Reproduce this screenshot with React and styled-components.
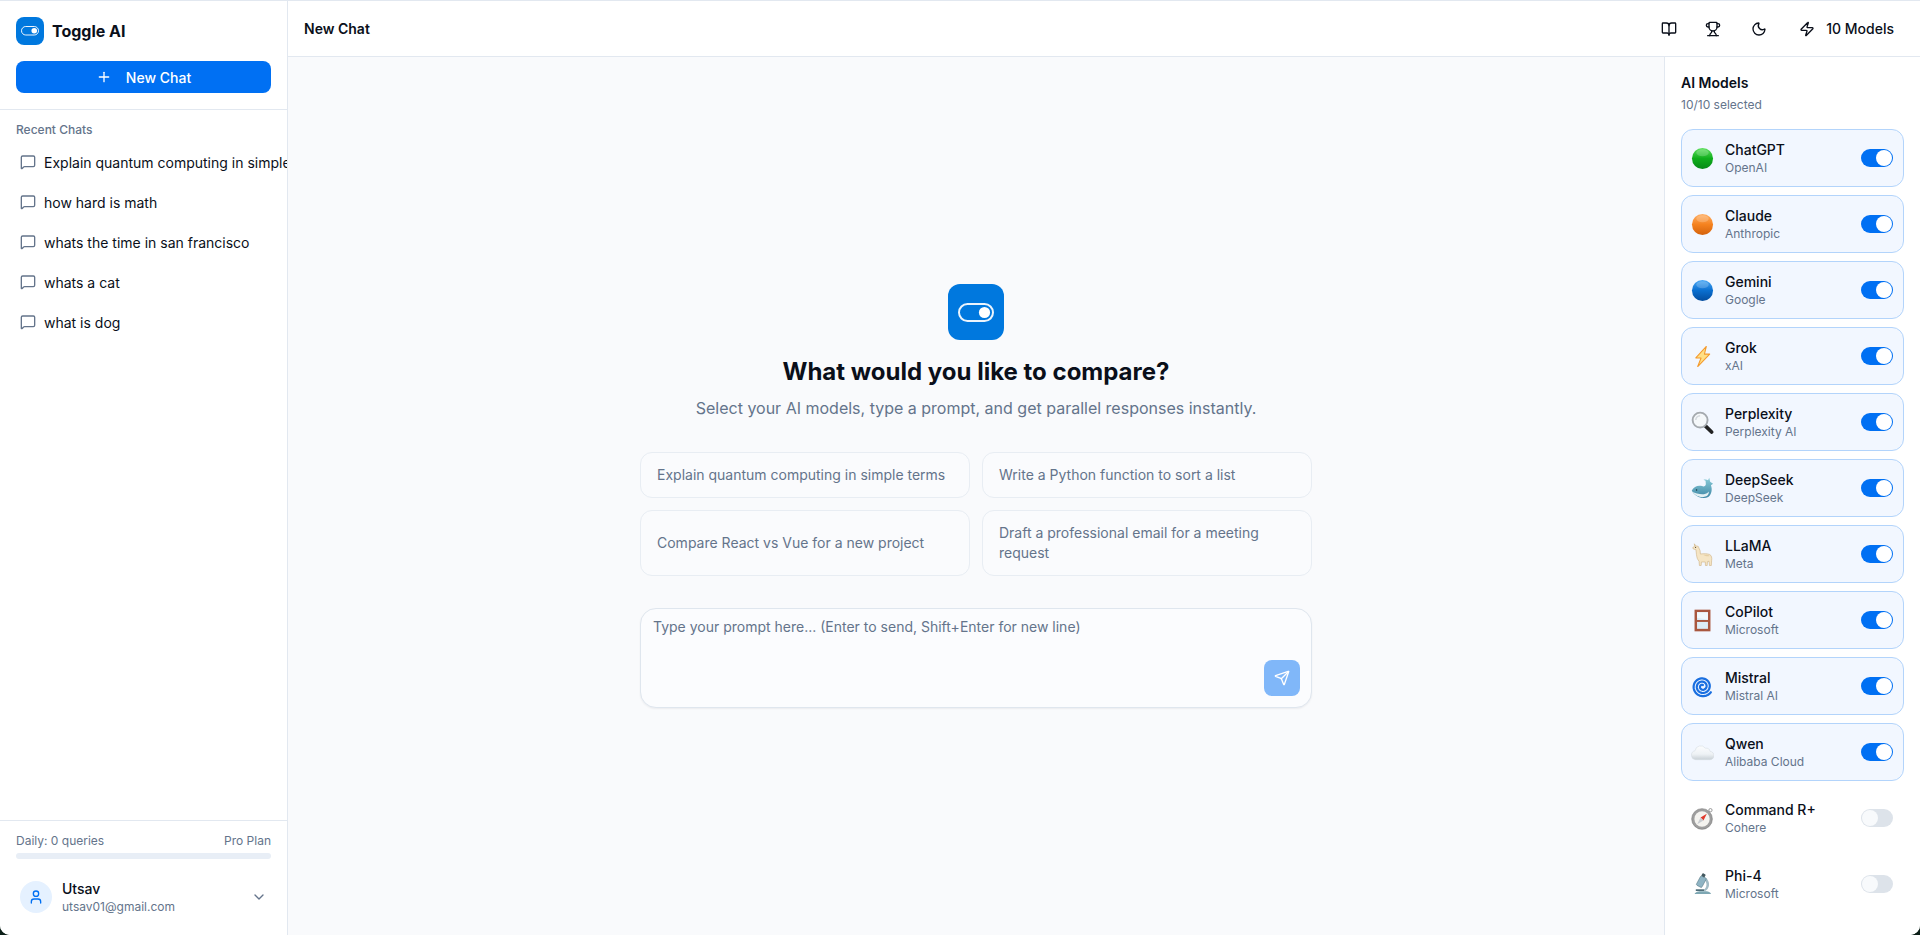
import React from "react";
import styled, { createGlobalStyle } from "styled-components";
import { BookOpen, ChevronDown, MessageSquare, Moon, Plus, Send, Trophy, User, Zap } from "lucide-react";

const recentChats = [
	"Explain quantum computing in simple terms",
	"how hard is math",
	"whats the time in san francisco",
	"whats a cat",
	"what is dog",
];

const suggestions = [
	"Explain quantum computing in simple terms",
	"Write a Python function to sort a list",
	"Compare React vs Vue for a new project",
	"Draft a professional email for a meeting request",
];

const Art = ({ children }) => (
	<svg viewBox="0 0 24 24" width="23" height="23" fill="none">
		{children}
	</svg>
);

const Ball = ({ id, light, mid, dark }) => (
	<Art>
		<defs>
			<linearGradient id={id} x1="0" y1="0" x2="0" y2="1">
				<stop offset="0" stopColor={light} />
				<stop offset="0.5" stopColor={mid} />
				<stop offset="1" stopColor={dark} />
			</linearGradient>
		</defs>
		<circle cx="12" cy="12" r="11" fill={`url(#${id})`} />
		<ellipse cx="12" cy="6" rx="6.5" ry="3.6" fill="#fff" opacity="0.2" />
	</Art>
);

const Bolt = () => (
	<Art>
		<path d="M16 1.5 5 13.5h5.500L7 22.500 19.500 9.500H14l2-8z" fill="#ffdf85" stroke="#f49a2c" strokeWidth="1.100" strokeLinejoin="round" />
	</Art>
);

const Magnifier = () => (
	<Art>
		<path d="M15 15.500 21.500 22" stroke="#222" strokeWidth="3.800" strokeLinecap="round" />
		<circle cx="9.500" cy="9.500" r="7.800" fill="#f5f8fa" stroke="#a5aaaf" strokeWidth="2" />
		<path d="M5 9.500a4.600 4.600 0 0 1 4.500-4.500" stroke="#d2d7dc" strokeWidth="1.500" />
	</Art>
);

const Whale = () => (
	<Art>
		<defs>
			<linearGradient id="whaleBody" x1="0" y1="0" x2="0" y2="1">
				<stop offset="0" stopColor="#8accd8" />
				<stop offset="1" stopColor="#3f87a6" />
			</linearGradient>
		</defs>
		<path d="M.8 14C3 10 7.500 8 11.500 9.500c2 .8 3.500 0 4-2l-.3-3.500-2.200-1.200c2-.3 3.500-.3 4.800.7L19 .8l1 4.200 3 2-2.200 1.500c1.700 4.500.7 9.500-2.800 12.300-5 2.700-14 .2-17.200-6.800z" fill="url(#whaleBody)" />
		<path d="M1.500 15.500c3 1.500 8 3 12 2.500 2.500-.3 4-1.300 5-2.800.5 2-.7 4-2.500 5-4.500 2-11.500.2-14.500-4.700z" fill="#e4f0f3" />
		<circle cx="5.800" cy="13.500" r="0.800" fill="#17323c" />
	</Art>
);

const Llama = () => (
	<Art>
		<path d="M3.500.8 5 3l2.500.5L9.500 8l.3 3.500c3.500-.5 7.500-.5 9.700.5 2 1 2.500 3.500 2 6.500l-.3 5h-1.900l-.5-4.500-1.600.5-.3 4h-1.800l-.2-3.700h-4l-.3 3.700H8.800l-.4-4.500c-1.500-1.500-2.400-4-2.700-7L5.200 7 2.500 6.300 1.800 4.800 3.800 3.500z" fill="#f5e5c5" stroke="#cdae7e" strokeWidth="0.600" strokeLinejoin="round" />
		<path d="M13 12.500c2-.3 5-.2 6.500 1-1.500.5-4.500.5-6.500-1z" fill="#e6cfa4" />
		<circle cx="4.800" cy="4.500" r="0.600" fill="#3a2c1a" />
	</Art>
);

const Win = () => (
	<Art>
		<rect x="5" y="2" width="14" height="20" fill="#dcecf6" stroke="#a9573f" strokeWidth="2.600" />
		<path d="M6.300 3.300h11.400v8L6.300 9z" fill="#f1f8fc" />
		<path d="M5 12.500h14" stroke="#a9573f" strokeWidth="2" />
	</Art>
);

// archimedean spiral, winding in from the rim of the icon
const spiralPath = () => {
	let d = "";
	for (let i = 0; i <= 120; i++) {
		const angle = (i / 120) * Math.PI * 5.4 + 0.6;
		const radius = 10.6 - (i / 120) * 9;
		const x = 12 + radius * Math.cos(angle);
		const y = 12 + radius * Math.sin(angle);
		d += `${i === 0 ? "M" : "L"}${x.toFixed(2)} ${y.toFixed(2)}`;
	}
	return d;
};

const Spiral = () => (
	<Art>
		<path d={spiralPath()} stroke="#1a6fe0" strokeWidth="2.300" strokeLinecap="round" strokeLinejoin="round" />
	</Art>
);

const Cloud = () => (
	<Art>
		<defs>
			<linearGradient id="cloudFill" x1="0" y1="0" x2="0" y2="1">
				<stop offset="0" stopColor="#fcfdfe" />
				<stop offset="0.6" stopColor="#eef2f5" />
				<stop offset="1" stopColor="#c8d0d6" />
			</linearGradient>
		</defs>
		<path d="M5 19.500a4.700 4.700 0 0 1-.8-9.300A6 6 0 0 1 15 7.500a4.500 4.500 0 0 1 5 3.400A4.300 4.300 0 0 1 19.500 19.500z" fill="url(#cloudFill)" stroke="#d5dce1" strokeWidth="0.600" />
	</Art>
);

const Compass = () => (
	<Art>
		<circle cx="20.300" cy="3.300" r="1.700" stroke="#8a8a8a" strokeWidth="0.900" />
		<circle cx="11.500" cy="12.500" r="10.800" fill="#9e9e9e" stroke="#767676" strokeWidth="0.600" />
		<circle cx="11.500" cy="12.500" r="8" fill="#f4f3ef" />
		<path d="M16.500 7 10 11l3 3z" fill="#e0392b" />
		<path d="M6.500 18 10 11l3 3z" fill="#c9cdd1" />
	</Art>
);

const Microscope = () => (
	<Art>
		<path d="M4 21c1.500-1.200 3-2 5-2h7c2.200 0 4 1 5 3H4z" fill="#7ea7b3" />
		<path d="M5 17h9v1.800H5z" fill="#4f6c77" />
		<path d="M14.500 4.500c4 2.200 5.500 7.500 3.500 11-.9 1.700-2 2.900-3.500 3.500l-1-1.500c3.500-2.500 3.500-8 .2-11z" fill="#a3bcc6" />
		<rect x="7.500" y="3.500" width="6.500" height="11" rx="1.200" transform="rotate(28 10.700 9)" fill="#8fb4c4" stroke="#5e7f8a" strokeWidth="0.600" />
		<rect x="11.200" y="0.700" width="3.800" height="3.200" rx="0.700" transform="rotate(28 13 2.300)" fill="#43585f" />
	</Art>
);

const models = [
	{ name: "ChatGPT", vendor: "OpenAI", on: true, icon: <Ball id="ballGreen" light="#5fe05f" mid="#0fae1c" dark="#078a18" /> },
	{ name: "Claude", vendor: "Anthropic", on: true, icon: <Ball id="ballOrange" light="#ffb066" mid="#f5821f" dark="#d4620c" /> },
	{ name: "Gemini", vendor: "Google", on: true, icon: <Ball id="ballBlue" light="#4aa8f5" mid="#0a6fd0" dark="#034c9e" /> },
	{ name: "Grok", vendor: "xAI", on: true, icon: <Bolt /> },
	{ name: "Perplexity", vendor: "Perplexity AI", on: true, icon: <Magnifier /> },
	{ name: "DeepSeek", vendor: "DeepSeek", on: true, icon: <Whale /> },
	{ name: "LLaMA", vendor: "Meta", on: true, icon: <Llama /> },
	{ name: "CoPilot", vendor: "Microsoft", on: true, icon: <Win /> },
	{ name: "Mistral", vendor: "Mistral AI", on: true, icon: <Spiral /> },
	{ name: "Qwen", vendor: "Alibaba Cloud", on: true, icon: <Cloud /> },
	{ name: "Command R+", vendor: "Cohere", on: false, icon: <Compass /> },
	{ name: "Phi-4", vendor: "Microsoft", on: false, icon: <Microscope /> },
];

const LogoGlyph = ({ width }) => (
	<svg viewBox="0 0 36 19" width={width} fill="none">
		<rect x="1" y="1" width="34" height="17" rx="8.500" stroke="#fff" strokeWidth="2" opacity="0.92" />
		<circle cx="26.500" cy="9.500" r="5.600" fill="#fff" />
	</svg>
);

const App = () => {
	return (
		<>
			<GlobalStyle />
			<Page>
				<Sidebar>
					<SidebarTop>
						<Brand>
							<LogoBox $size={28} $radius={8}>
								<LogoGlyph width={18} />
							</LogoBox>
							<BrandName>Toggle AI</BrandName>
						</Brand>
						<NewChatButton>
							<Plus size={16} strokeWidth={2} />
							New Chat
						</NewChatButton>
					</SidebarTop>
					<Recent>
						<RecentTitle>Recent Chats</RecentTitle>
						{recentChats.map((chat) => (
							<ChatRow key={chat}>
								<MessageSquare size={16} />
								<span>{chat}</span>
							</ChatRow>
						))}
					</Recent>
					<SidebarFoot>
						<UsageLine>
							<span>Daily: 0 queries</span>
							<span>Pro Plan</span>
						</UsageLine>
						<UsageBar />
						<UserRow>
							<Avatar>
								<User size={16} />
							</Avatar>
							<UserText>
								<UserName>Utsav</UserName>
								<UserMail>utsav01@gmail.com</UserMail>
							</UserText>
							<ChevronDown size={16} color="#64748b" />
						</UserRow>
					</SidebarFoot>
				</Sidebar>
				<Main>
					<TopBar>
						<TopTitle>New Chat</TopTitle>
						<TopActions>
							<IconButton $width={36}>
								<BookOpen size={16} />
							</IconButton>
							<IconButton $width={36}>
								<Trophy size={16} />
							</IconButton>
							<IconButton $width={40}>
								<Moon size={16} />
							</IconButton>
							<ModelsButton>
								<Zap size={16} />
								10 Models
							</ModelsButton>
						</TopActions>
					</TopBar>
					<Body>
						<Center>
							<Welcome>
								<LogoBox $size={56} $radius={12}>
									<LogoGlyph width={36} />
								</LogoBox>
								<Heading>What would you like to compare?</Heading>
								<Sub>Select your AI models, type a prompt, and get parallel responses instantly.</Sub>
								<SuggestionGrid>
									{suggestions.map((text) => (
										<Suggestion key={text}>{text}</Suggestion>
									))}
								</SuggestionGrid>
								<Composer>
									<PromptInput rows={2} placeholder="Type your prompt here... (Enter to send, Shift+Enter for new line)" />
									<SendButton>
										<Send size={16} />
									</SendButton>
								</Composer>
							</Welcome>
						</Center>
						<ModelPanel>
							<PanelTitle>AI Models</PanelTitle>
							<PanelSub>10/10 selected</PanelSub>
							<ModelList>
								{models.map((model) => (
									<ModelCard key={model.name} $on={model.on}>
										<ModelIcon>{model.icon}</ModelIcon>
										<ModelText>
											<ModelName>{model.name}</ModelName>
											<ModelVendor>{model.vendor}</ModelVendor>
										</ModelText>
										<Switch $on={model.on} />
									</ModelCard>
								))}
							</ModelList>
						</ModelPanel>
					</Body>
				</Main>
			</Page>
		</>
	);
};

const GlobalStyle = createGlobalStyle`
	* {
		box-sizing: border-box;
	}
	html,
	body {
		margin: 0;
		height: 100%;
		overflow: hidden;
		background: #0c1f18;
	}
	body {
		font-family: Inter, "Liberation Sans", sans-serif;
		color: #0a0f1a;
	}
`;

const Page = styled.div`
	display: flex;
	height: 935px;
	background: #fff;
	border-top: 1px solid #e2e8f0;
	border-radius: 0 0 10px 10px;
	overflow: hidden;
`;

const Sidebar = styled.aside`
	display: flex;
	flex-direction: column;
	width: 288px;
	flex-shrink: 0;
	background: #fff;
	border-right: 1px solid #e2e8f0;
`;

const SidebarTop = styled.div`
	padding: 16px;
	border-bottom: 1px solid #e2e8f0;
`;

const Brand = styled.div`
	display: flex;
	align-items: center;
	gap: 8px;
	margin-bottom: 16px;
`;

const LogoBox = styled.div`
	display: flex;
	align-items: center;
	justify-content: center;
	width: ${(p) => p.$size}px;
	height: ${(p) => p.$size}px;
	border-radius: ${(p) => p.$radius}px;
	background: #0078de;
	flex-shrink: 0;
`;

const BrandName = styled.span`
	font-size: 16px;
	font-weight: 700;
	line-height: 28px;
`;

const NewChatButton = styled.button`
	display: flex;
	align-items: center;
	justify-content: center;
	gap: 14px;
	width: 100%;
	height: 32px;
	border: 0;
	border-radius: 8px;
	background: #0070f3;
	color: #fff;
	font-family: inherit;
	font-size: 14px;
	font-weight: 500;
`;

const Recent = styled.div`
	flex: 1;
	padding-top: 12px;
	overflow: hidden;
`;

const RecentTitle = styled.div`
	padding: 0 16px 4px;
	font-size: 12px;
	line-height: 16px;
	font-weight: 500;
	color: #64748b;
`;

const ChatRow = styled.div`
	display: flex;
	align-items: center;
	gap: 8px;
	height: 40px;
	padding-left: 20px;
	font-size: 14px;
	white-space: nowrap;
	overflow: hidden;
	svg {
		flex-shrink: 0;
		color: #64748b;
	}
`;

const SidebarFoot = styled.div`
	padding: 12px 16px 20px;
	border-top: 1px solid #e2e8f0;
`;

const UsageLine = styled.div`
	display: flex;
	justify-content: space-between;
	font-size: 12px;
	line-height: 16px;
	color: #64748b;
`;

const UsageBar = styled.div`
	height: 6px;
	margin-top: 4px;
	border-radius: 3px;
	background: #e8eef6;
`;

const UserRow = styled.div`
	display: flex;
	align-items: center;
	gap: 10px;
	margin-top: 20px;
	padding: 0 4px;
`;

const Avatar = styled.div`
	display: flex;
	align-items: center;
	justify-content: center;
	width: 32px;
	height: 32px;
	border-radius: 50%;
	background: #e5f1ff;
	color: #0070f3;
	flex-shrink: 0;
`;

const UserText = styled.div`
	flex: 1;
	min-width: 0;
`;

const UserName = styled.div`
	font-size: 14px;
	line-height: 20px;
	font-weight: 500;
`;

const UserMail = styled.div`
	font-size: 12px;
	line-height: 16px;
	color: #64748b;
`;

const Main = styled.main`
	display: flex;
	flex-direction: column;
	flex: 1;
	min-width: 0;
`;

const TopBar = styled.header`
	display: flex;
	align-items: center;
	justify-content: space-between;
	height: 56px;
	padding: 0 16px;
	flex-shrink: 0;
	background: #fff;
	border-bottom: 1px solid #e2e8f0;
`;

const TopTitle = styled.h1`
	margin: 0;
	font-size: 14px;
	font-weight: 600;
`;

const TopActions = styled.div`
	display: flex;
	align-items: center;
	gap: 8px;
`;

const IconButton = styled.button`
	display: flex;
	align-items: center;
	justify-content: center;
	width: ${(p) => p.$width}px;
	height: 36px;
	padding: 0;
	border: 0;
	background: none;
	color: #0a0f1a;
`;

const ModelsButton = styled.button`
	display: flex;
	align-items: center;
	gap: 11px;
	height: 36px;
	padding: 0 10px 0 12px;
	border: 0;
	background: none;
	color: #0a0f1a;
	font-family: inherit;
	font-size: 14px;
	font-weight: 500;
`;

const Body = styled.div`
	display: flex;
	flex: 1;
	min-height: 0;
`;

const Center = styled.section`
	display: flex;
	align-items: center;
	justify-content: center;
	flex: 1;
	min-width: 0;
	background: #f9fafc;
`;

const Welcome = styled.div`
	display: flex;
	flex-direction: column;
	align-items: center;
	width: 672px;
`;

const Heading = styled.h2`
	margin: 16px 0 0;
	font-size: 24px;
	line-height: 32px;
	font-weight: 700;
`;

const Sub = styled.p`
	margin: 8px 0 0;
	font-size: 16px;
	line-height: 24px;
	color: #64748b;
`;

const SuggestionGrid = styled.div`
	display: grid;
	grid-template-columns: 1fr 1fr;
	gap: 12px;
	width: 100%;
	margin-top: 32px;
`;

const Suggestion = styled.button`
	display: block;
	padding: 12px 16px;
	border: 1px solid #e8edf3;
	border-radius: 12px;
	background: #fafbfd;
	color: #64748b;
	font-family: inherit;
	font-size: 14px;
	line-height: 20px;
	text-align: left;
`;

const Composer = styled.div`
	position: relative;
	width: 100%;
	height: 100px;
	margin-top: 32px;
	border: 1px solid #dfe6ee;
	border-radius: 16px;
	background: #fbfcfe;
	box-shadow: 0 1px 2px rgba(15, 23, 42, 0.06);
`;

const PromptInput = styled.textarea`
	display: block;
	width: 100%;
	height: 100%;
	padding: 8px 12px;
	border: 0;
	background: none;
	outline: none;
	resize: none;
	font-family: inherit;
	font-size: 14px;
	line-height: 20px;
	&::placeholder {
		color: #64748b;
		opacity: 1;
	}
`;

const SendButton = styled.button`
	position: absolute;
	right: 11px;
	bottom: 11px;
	display: flex;
	align-items: center;
	justify-content: center;
	width: 36px;
	height: 36px;
	padding: 0;
	border: 0;
	border-radius: 8px;
	background: #80b7f9;
	color: #fff;
`;

const ModelPanel = styled.aside`
	width: 256px;
	flex-shrink: 0;
	padding: 16px;
	background: #fff;
	border-left: 1px solid #e2e8f0;
	overflow: hidden;
`;

const PanelTitle = styled.div`
	font-size: 14px;
	line-height: 20px;
	font-weight: 600;
`;

const PanelSub = styled.div`
	margin-top: 4px;
	font-size: 12px;
	line-height: 16px;
	color: #64748b;
`;

const ModelList = styled.div`
	display: flex;
	flex-direction: column;
	gap: 8px;
	margin-top: 16px;
`;

const ModelCard = styled.div`
	display: flex;
	align-items: center;
	gap: 12px;
	padding: 10px;
	border: 1px solid ${(p) => (p.$on ? "#b3d4fb" : "transparent")};
	border-radius: 12px;
	background: ${(p) => (p.$on ? "#f2f7ff" : "transparent")};
`;

const ModelIcon = styled.div`
	display: flex;
	align-items: center;
	justify-content: center;
	width: 21px;
	height: 24px;
	flex-shrink: 0;
	svg {
		flex-shrink: 0;
	}
`;

const ModelText = styled.div`
	flex: 1;
	min-width: 0;
`;

const ModelName = styled.div`
	font-size: 14px;
	line-height: 20px;
	font-weight: 500;
`;

const ModelVendor = styled.div`
	font-size: 12px;
	line-height: 16px;
	color: #64748b;
`;

const Switch = styled.span`
	display: flex;
	align-items: center;
	justify-content: ${(p) => (p.$on ? "flex-end" : "flex-start")};
	width: 32px;
	height: 18px;
	padding: 1px;
	border-radius: 9px;
	background: ${(p) => (p.$on ? "#0070f3" : "#dde3ea")};
	flex-shrink: 0;
	&::after {
		content: "";
		width: 16px;
		height: 16px;
		border-radius: 50%;
		background: ${(p) => (p.$on ? "#fff" : "#f8fafc")};
	}
`;

export default App;
